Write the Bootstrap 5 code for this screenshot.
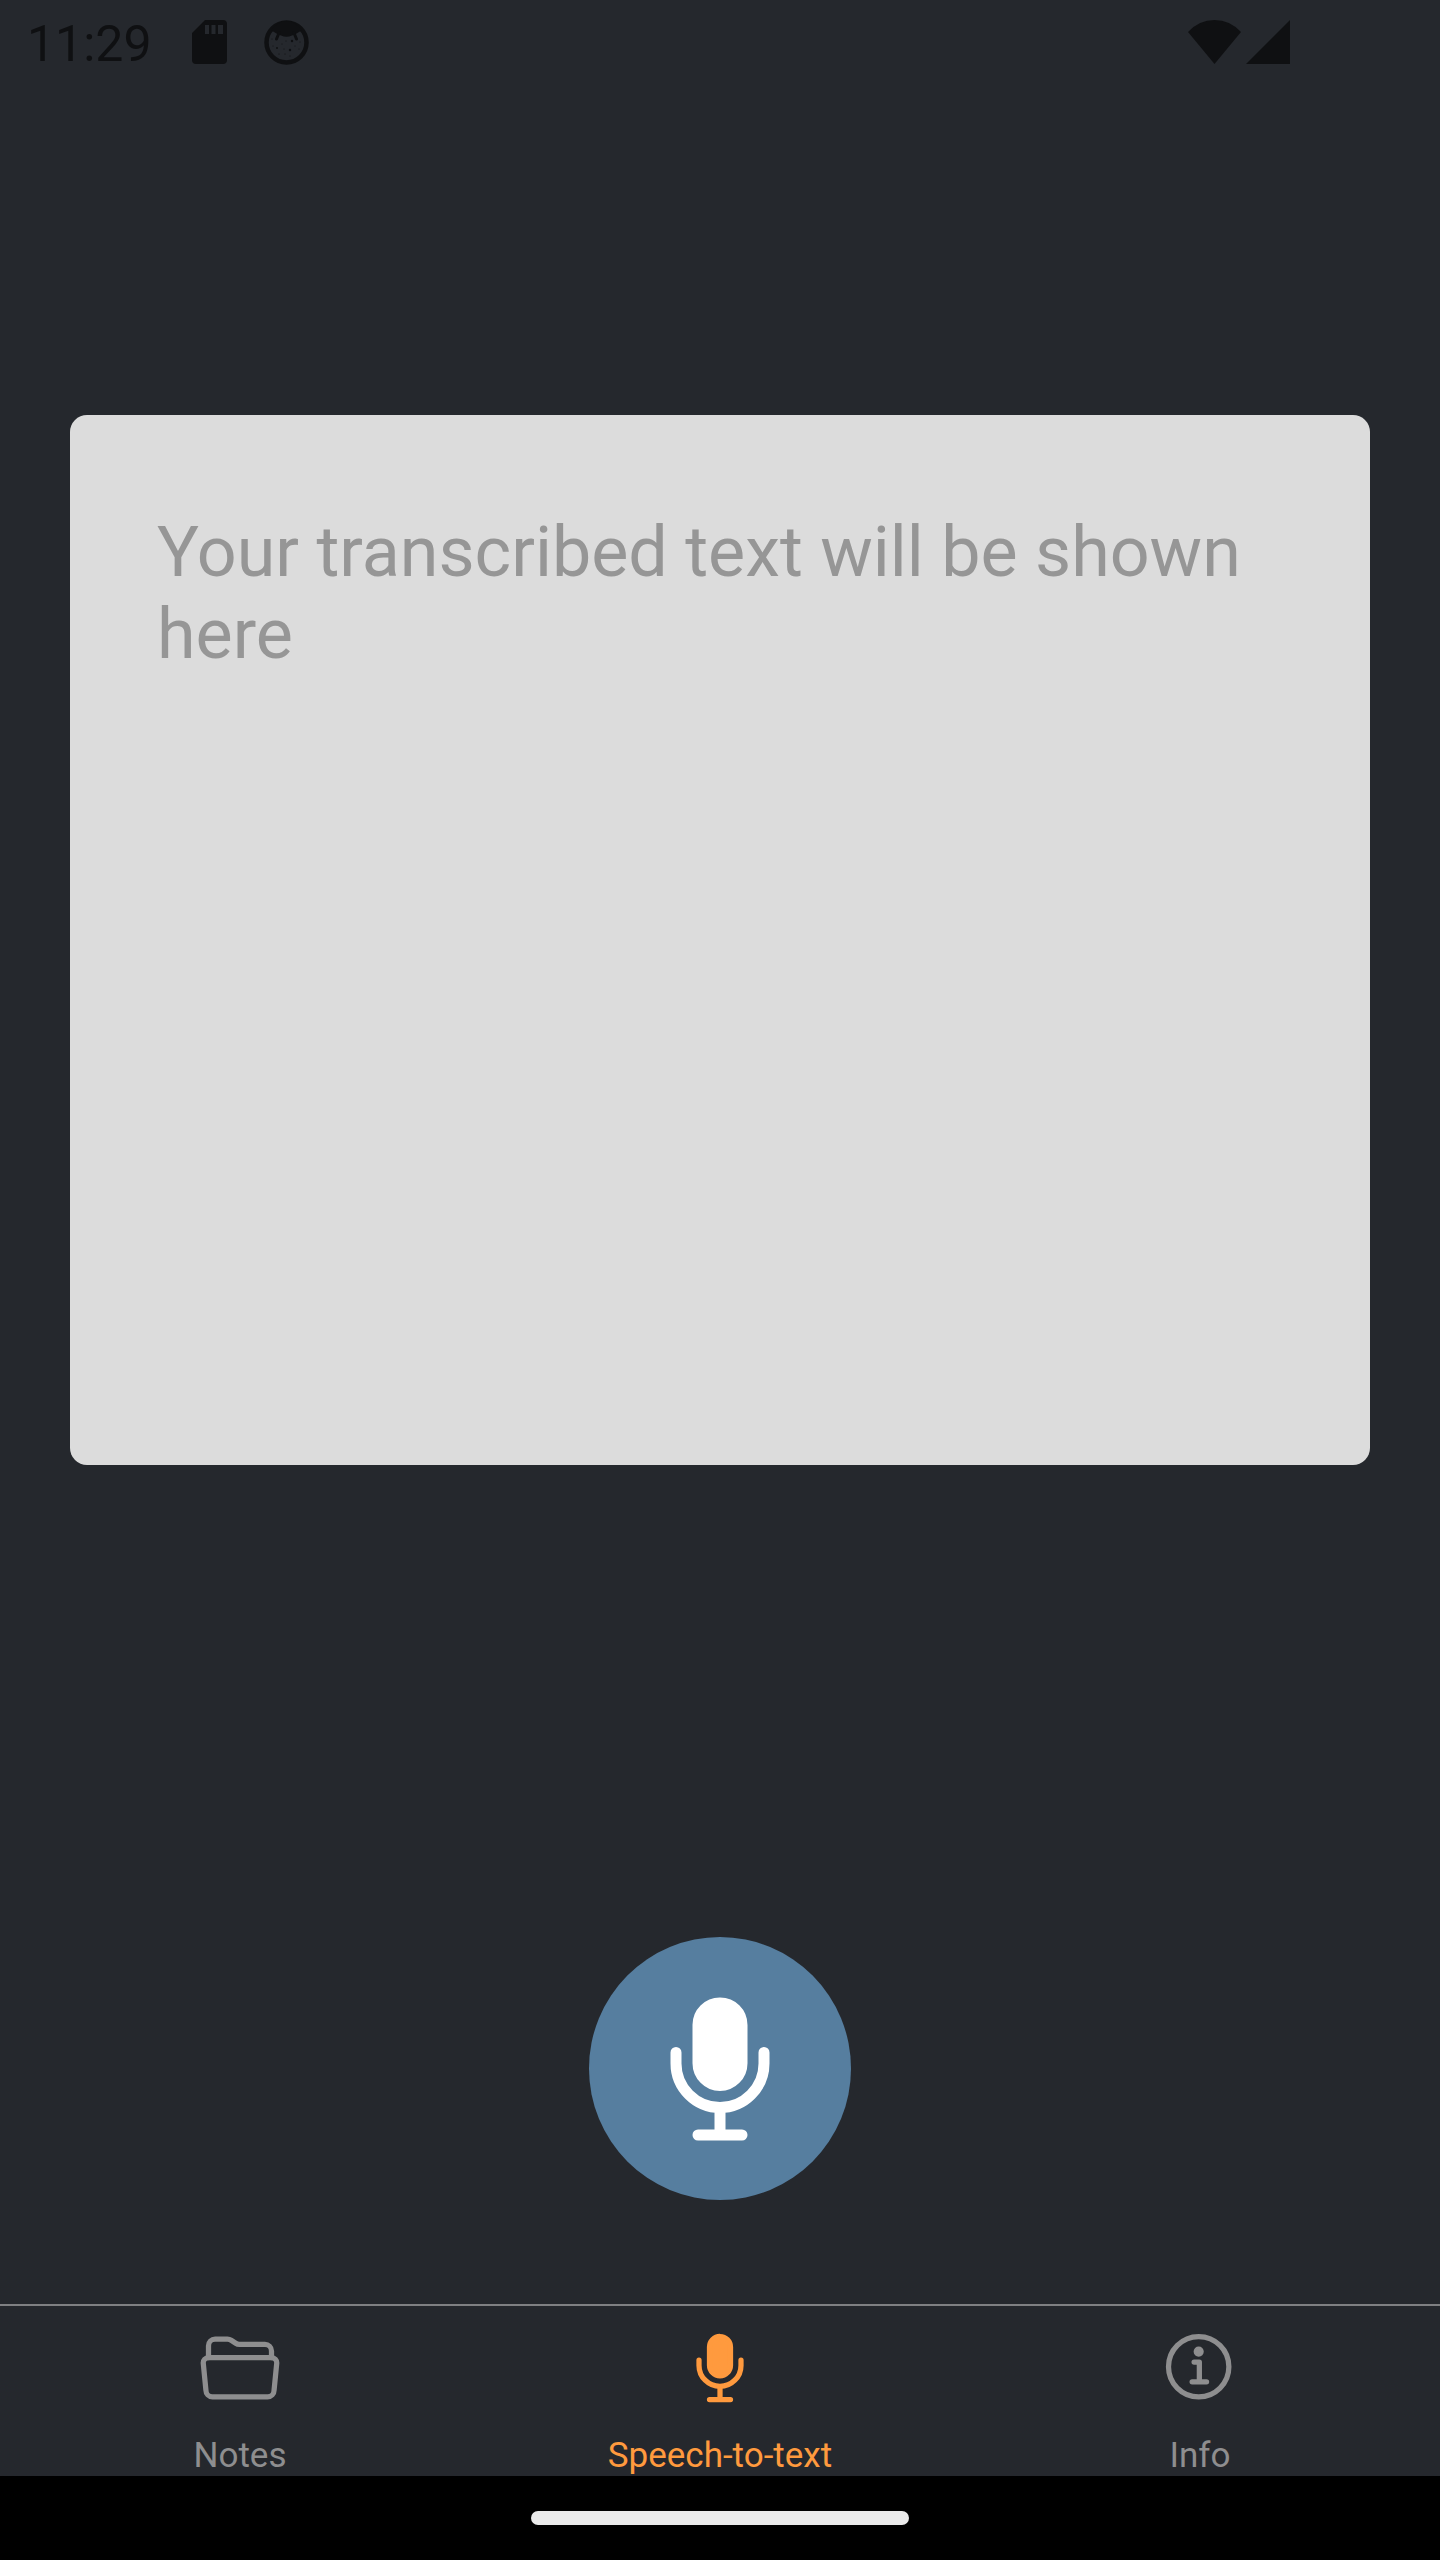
<!DOCTYPE html>
<html lang="en">
<head>
<meta charset="utf-8">
<meta name="viewport" content="width=device-width, initial-scale=1">
<title>Speech-to-text</title>
<link href="https://cdn.jsdelivr.net/npm/bootstrap@5.3.0/dist/css/bootstrap.min.css" rel="stylesheet">
<style>
  body { background: #25282d; font-family: Roboto, sans-serif; }
  .status-bar { color: #0f1012; height: 88px; padding: 0 150px 4px 27px; }
  .clock { font-size: 50px; line-height: 58px; padding-top: 3px; }
  .status-icons { gap: 37px; margin-left: 40px; }
  .signal-icons { gap: 5px; }
  .screen { padding: 327px 70px 104px; }
  .transcript, .transcript:focus {
    background: #dcdcdc; color: #333; border: 0; border-radius: 17px; box-shadow: none;
    height: 1050px; padding: 96px 87px; font-size: 70px; line-height: 82px; resize: none;
  }
  .transcript::placeholder { color: #969696; opacity: 1; }
  .record-btn, .record-btn:hover { width: 262px; height: 263px; background: #567e9f; color: #fff; border: 0; }
  .glyph { fill: none; stroke: currentColor; stroke-width: 32; stroke-linecap: round; stroke-linejoin: round; }
  .glyph .solid { fill: currentColor; }
  .tab-bar { border-top: 2px solid #7f8082; }
  .tab-bar .nav-link { color: #8e8e8f; padding: 20px 0 0; gap: 25px; font-size: 35px; line-height: 41px; }
  .tab-bar .nav-link.active { color: #ff9a3e; }
  .home-area { background: #000; height: 84px; }
  .home-pill { width: 378px; height: 14px; background: #ebebeb; }
</style>
<script src="https://cdn.jsdelivr.net/npm/bootstrap@5.3.0/dist/js/bootstrap.bundle.min.js" defer></script>
</head>
<body>
<div class="d-flex flex-column min-vh-100">
  <header class="status-bar d-flex align-items-center justify-content-between">
    <div class="d-flex align-items-center">
      <span class="clock">11:29</span>
      <div class="status-icons d-flex align-items-center">
        <svg width="35" height="44" viewBox="0 0 35 44" fill="currentColor" aria-hidden="true">
          <path fill-rule="evenodd" d="M13 0H31a4 4 0 0 1 4 4V40a4 4 0 0 1-4 4H4a4 4 0 0 1-4-4V13ZM13 5v9h4V5ZM19.500 5v9h4V5ZM26 5v9h5V5Z"/>
        </svg>
        <svg width="45" height="45" viewBox="0 0 45 45" fill="currentColor" aria-hidden="true">
          <circle cx="22.500" cy="22.500" r="20" fill="none" stroke="currentColor" stroke-width="4.500"/>
          <path d="M7 10Q22.500-8 38 10L35 12Q32 14 28 15.500Q22.500 18 17 15.500Q13 14 10 12Z"/>
          <path d="M15 13L12.500 19M30 13L32.500 19" stroke="currentColor" stroke-width="3" stroke-linecap="round"/>
          <g>
            <circle cx="8" cy="19" r=".5"/><circle cx="9" cy="26" r=".5"/><circle cx="13" cy="28" r="1"/>
            <circle cx="15" cy="34" r=".6"/><circle cx="18" cy="24" r=".5"/><circle cx="20" cy="29" r=".5"/>
            <circle cx="21" cy="34" r=".6"/><circle cx="22" cy="21" r=".5"/><circle cx="26" cy="30" r="1.200"/>
            <circle cx="28" cy="21" r="1.200"/><circle cx="31" cy="26" r=".5"/><circle cx="35" cy="29" r=".5"/>
            <circle cx="36" cy="22" r=".5"/><circle cx="26" cy="36" r=".5"/>
          </g>
        </svg>
      </div>
    </div>
    <div class="signal-icons d-flex align-items-center">
      <svg width="53" height="44" viewBox="0 0 53 44" fill="currentColor" aria-hidden="true"><path d="M0 12Q11 0 26.500 0T53 12L26.500 44Z"/></svg>
      <svg width="44" height="44" viewBox="0 0 44 44" fill="currentColor" aria-hidden="true"><path d="M44 0V44H0Z"/></svg>
    </div>
  </header>

  <main class="screen flex-grow-1 d-flex flex-column align-items-center">
    <textarea class="transcript form-control" aria-label="Transcribed text" placeholder="Your transcribed text will be shown here" readonly></textarea>
    <button type="button" class="record-btn btn rounded-circle p-0 mt-auto d-flex align-items-center justify-content-center" aria-label="Record">
      <svg class="glyph" width="176" height="176" viewBox="0 0 512 512" aria-hidden="true">
        <path d="M192 448h128M384 208v32c0 70.400-57.600 128-128 128s-128-57.600-128-128v-32M256 368v80"/>
        <path class="solid" d="M256 64a63.680 63.680 0 0 0-64 64v111c0 35.200 29 65 64 65s64-29 64-65V128c0-36-28-64-64-64z"/>
      </svg>
    </button>
  </main>

  <nav class="tab-bar nav nav-justified flex-nowrap" aria-label="Sections">
    <a class="nav-link col d-flex flex-column align-items-center" href="#notes">
      <svg class="glyph" width="84" height="84" viewBox="0 0 512 512" aria-hidden="true">
        <path d="M64 192v-72a40 40 0 0 1 40-40h75.890a40 40 0 0 1 22.190 6.720l27.840 18.560a40 40 0 0 0 22.190 6.720H408a40 40 0 0 1 40 40v40"/>
        <path d="M479.900 226.550L463.680 392a40 40 0 0 1-39.930 40H88.250a40 40 0 0 1-39.930-40L32.100 226.550A32 32 0 0 1 64 192h384.100a32 32 0 0 1 31.800 34.550z"/>
      </svg>
      <span>Notes</span>
    </a>
    <a class="nav-link col active d-flex flex-column align-items-center" href="#speech" aria-current="page">
      <svg class="glyph" width="84" height="84" viewBox="0 0 512 512" aria-hidden="true">
        <path d="M192 448h128M384 208v32c0 70.400-57.600 128-128 128s-128-57.600-128-128v-32M256 368v80"/>
        <path class="solid" d="M256 64a63.680 63.680 0 0 0-64 64v111c0 35.200 29 65 64 65s64-29 64-65V128c0-36-28-64-64-64z"/>
      </svg>
      <span>Speech-to-text</span>
    </a>
    <a class="nav-link col d-flex flex-column align-items-center" href="#info">
      <svg class="glyph" width="84" height="84" viewBox="0 0 512 512" aria-hidden="true">
        <circle cx="248" cy="248" r="184"/>
        <path d="M220 220h32v116M208 340h88"/>
        <circle cx="248" cy="156" r="26" fill="currentColor" stroke-width="10"/>
      </svg>
      <span>Info</span>
    </a>
  </nav>

  <footer class="home-area d-flex align-items-center justify-content-center">
    <div class="home-pill rounded-pill"></div>
  </footer>
</div>
</body>
</html>
